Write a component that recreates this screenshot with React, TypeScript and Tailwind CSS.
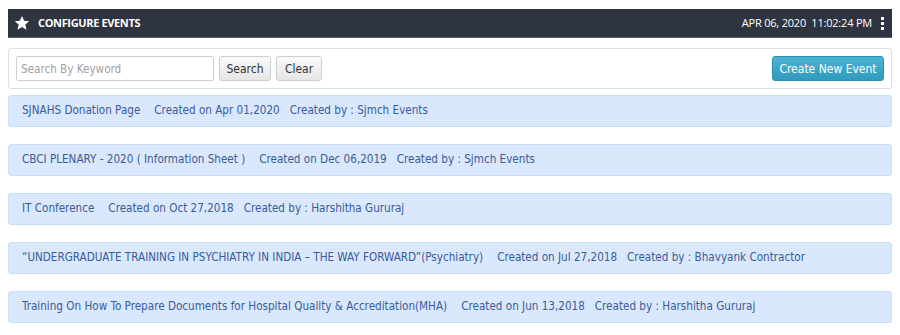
import React from "react";

const rows = [
  { title: "SJNAHS Donation Page", date: "Apr 01,2020", by: "Sjmch Events" },
  { title: "CBCI PLENARY - 2020 ( Information Sheet )", date: "Dec 06,2019", by: "Sjmch Events" },
  { title: "IT Conference", date: "Oct 27,2018", by: "Harshitha Gururaj" },
  {
    title: "\u201CUNDERGRADUATE TRAINING IN PSYCHIATRY IN INDIA \u2013 THE WAY FORWARD\u201D(Psychiatry)",
    date: "Jul 27,2018",
    by: "Bhavyank Contractor",
  },
  {
    title: "Training On How To Prepare Documents for Hospital Quality & Accreditation(MHA)",
    date: "Jun 13,2018",
    by: "Harshitha Gururaj",
  },
];

const rowFont = { fontFamily: '"DejaVu Sans Condensed", "DejaVu Sans", Tahoma, sans-serif' };

export default function App() {
  return (
    <div className="w-[900px] h-[335px] bg-white px-[8px] pt-[9px] overflow-hidden" style={rowFont}>
      <div className="h-[29px] bg-[#2e3440] flex items-center justify-between pl-[6px] pr-[8px] border-b border-[#5a606b]">
        <div className="flex items-center gap-[8px]">
          <svg width="16" height="16" viewBox="0 0 24 24" className="block">
            <path
              fill="#ffffff"
              d="M12 1.5l3.2 7.1 7.6.7-5.8 5.1 1.8 7.6L12 18l-6.8 4 1.8-7.6L1.2 9.3l7.6-.7z"
            />
          </svg>
          <span
            className="text-white text-[11px] font-bold tracking-[-0.35px]"
            style={{ fontFamily: '"Open Sans", sans-serif' }}
          >
            CONFIGURE EVENTS
          </span>
        </div>
        <div className="flex items-center gap-[9px]">
          <span
            className="text-white text-[11px] font-medium whitespace-pre tracking-[-0.2px]"
            style={{ fontFamily: '"Open Sans", sans-serif' }}
          >
            {"APR 06, 2020  11:02:24 PM"}
          </span>
          <div className="flex flex-col gap-[2px]">
            <span className="w-[3px] h-[3px] bg-white" />
            <span className="w-[3px] h-[3px] bg-white" />
            <span className="w-[3px] h-[3px] bg-white" />
          </div>
        </div>
      </div>

      <div className="mt-[10px] h-[41px] border border-[#e0e0e0] rounded-[3px] flex items-center justify-between px-[7px]">
        <div className="flex items-center gap-[5px]">
          <input
            placeholder="Search By Keyword"
            className="w-[198px] h-[25px] border border-[#cfcfcf] rounded-[2px] px-[4px] text-[11.6px] text-[#333] placeholder:text-[#a0a0a0] outline-none"
            style={rowFont}
          />
          <button className="h-[25px] w-[52px] border border-[#cfcfcf] rounded-[3px] bg-gradient-to-b from-[#fafafa] to-[#e6e6e6] text-[12px] text-[#333]">
            Search
          </button>
          <button className="h-[25px] w-[46px] border border-[#cfcfcf] rounded-[3px] bg-gradient-to-b from-[#fafafa] to-[#e6e6e6] text-[12px] text-[#333]">
            Clear
          </button>
        </div>
        <button className="h-[25px] w-[112px] rounded-[3px] border border-[#2d8fae] bg-gradient-to-b from-[#4db3d4] to-[#2f9bbd] text-[12px] text-white">
          Create New Event
        </button>
      </div>

      <div className="mt-[6px] flex flex-col gap-[17px]">
        {rows.map((r, i) => (
          <div
            key={i}
            className="h-[32px] bg-[#d9e8fc] border border-[#c6defa] rounded-[3px] flex items-center pl-[13px] text-[11.6px] text-[#3b5b9a] whitespace-nowrap"
          >
            <span>{r.title}</span>
            <span className="ml-[14px]">Created on {r.date}</span>
            <span className="ml-[10px]">Created by : {r.by}</span>
          </div>
        ))}
      </div>
    </div>
  );
}
